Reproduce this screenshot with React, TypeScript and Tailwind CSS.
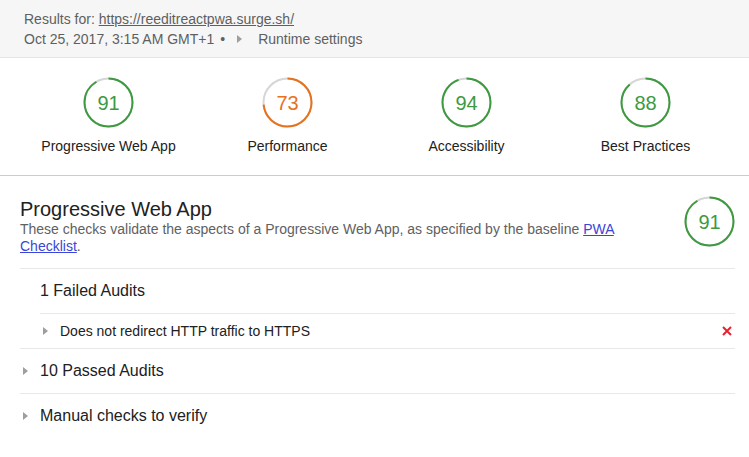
import React from 'react';

const GREEN = '#3d9a3f';
const ORANGE = '#e8711c';

function Gauge({ score, color }: { score: number; color: string }) {
  const r = 24;
  const c = 2 * Math.PI * r;
  return (
    <div className="relative w-[51px] h-[51px] shrink-0">
      <svg viewBox="0 0 51 51" className="absolute inset-0 w-full h-full -rotate-90">
        <circle cx="25.5" cy="25.5" r={r} fill="none" stroke="#d6d6d6" strokeWidth="2" />
        <circle
          cx="25.5"
          cy="25.5"
          r={r}
          fill="none"
          stroke={color}
          strokeWidth="2"
          strokeDasharray={`${(c * score) / 100} ${c}`}
        />
      </svg>
      <div className="absolute inset-0 flex items-center justify-center text-[20px]" style={{ color }}>
        {score}
      </div>
    </div>
  );
}

function Arrow() {
  return (
    <svg width="5" height="8" viewBox="0 0 5 8" className="shrink-0">
      <polygon points="0,0 5,4 0,8" fill="#9e9e9e" />
    </svg>
  );
}

const categories = [
  { label: 'Progressive Web App', score: 91, color: GREEN },
  { label: 'Performance', score: 73, color: ORANGE },
  { label: 'Accessibility', score: 94, color: GREEN },
  { label: 'Best Practices', score: 88, color: GREEN },
];

export default function App() {
  return (
    <div className="w-[749px] h-[457px] bg-white overflow-hidden font-['Liberation_Sans',Arial,sans-serif] text-[#212121]">
      {/* Report header */}
      <div className="h-[58px] bg-[#f6f6f6] border-b border-[#e6e6e6] pl-[24px] pt-[9px] text-[14px] leading-[20px] text-[#5f5f5f]">
        <div>
          Results for: <span className="underline">https://reeditreactpwa.surge.sh/</span>
        </div>
        <div className="flex items-center">
          <span>Oct 25, 2017, 3:15 AM GMT+1</span>
          <span className="ml-[6px]">•</span>
          <span className="ml-[12px] flex items-center"><Arrow /></span>
          <span className="ml-[16px]">Runtime settings</span>
        </div>
      </div>

      {/* Score overview */}
      <div className="h-[118px] border-b border-[#cccccc] pl-[19px] pt-[19px]">
        <div className="grid grid-cols-4 w-[716px]">
          {categories.map((c) => (
            <div key={c.label} className="flex flex-col items-center">
              <Gauge score={c.score} color={c.color} />
              <div className="mt-[9px] text-[14px] leading-[18px]">{c.label}</div>
            </div>
          ))}
        </div>
      </div>

      {/* Category section */}
      <div className="pl-[20px] pr-[14px] pt-[21px]">
        <div className="flex items-start gap-[20px]">
          <div className="flex-1">
            <div className="text-[20px] leading-[24px]">Progressive Web App</div>
            <div className="text-[14px] leading-[17px] text-[#616161]">
              These checks validate the aspects of a Progressive Web App, as specified by the baseline{' '}
              <span className="underline text-[#3a46d8]">PWA</span>{' '}
              <span className="underline text-[#3a46d8]">Checklist</span>.
            </div>
          </div>
          <div className="-mt-[1px]">
            <Gauge score={91} color={GREEN} />
          </div>
        </div>

        <div className="mt-[13px] border-t border-[#e8e8e8]">
          <div className="h-[44px] flex items-center pl-[20px] text-[16px]">1 Failed Audits</div>
          <div className="ml-[20px] border-t border-[#e8e8e8] h-[35px] flex items-center pl-[3px] pr-[3px] text-[14px]">
            <Arrow />
            <span className="ml-[12px] flex-1">Does not redirect HTTP traffic to HTTPS</span>
            <svg width="10" height="10" viewBox="0 0 10 10">
              <path d="M1 1 L9 9 M9 1 L1 9" stroke="#e8202f" strokeWidth="2" />
            </svg>
          </div>
        </div>

        <div className="border-t border-[#e8e8e8] h-[45px] flex items-center pl-[3px] text-[16px]">
          <Arrow />
          <span className="ml-[12px]">10 Passed Audits</span>
        </div>
        <div className="border-t border-[#e8e8e8] h-[45px] flex items-center pl-[3px] text-[16px]">
          <Arrow />
          <span className="ml-[12px]">Manual checks to verify</span>
        </div>
      </div>
    </div>
  );
}
